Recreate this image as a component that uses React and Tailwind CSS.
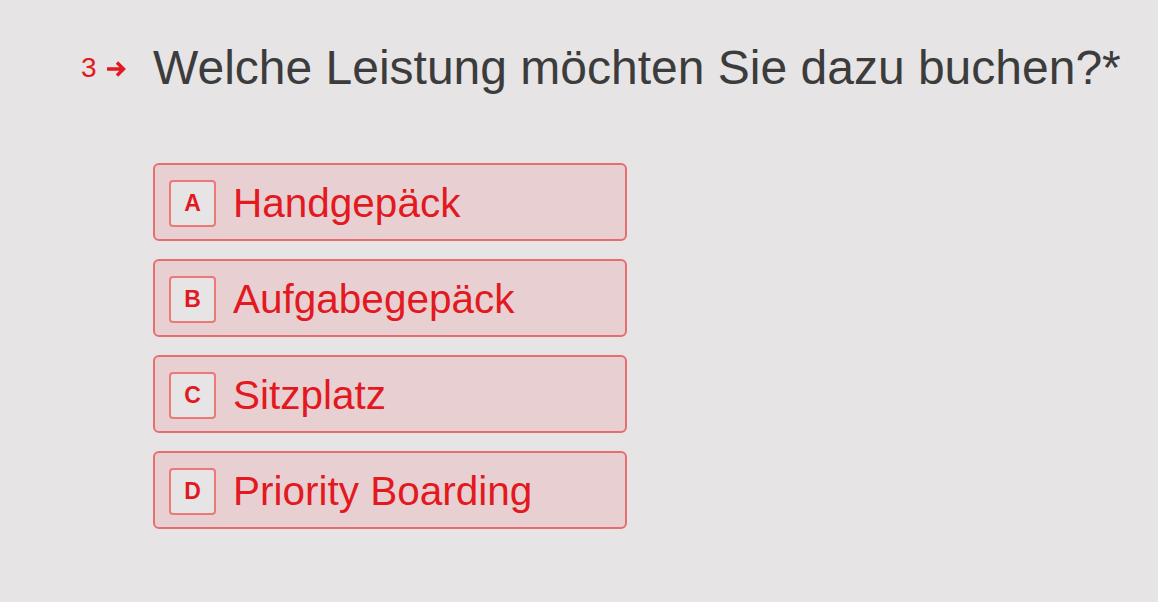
export default function App() {
  const options = [
    ["A", "Handgepäck"],
    ["B", "Aufgabegepäck"],
    ["C", "Sitzplatz"],
    ["D", "Priority Boarding"],
  ];
  return (
    <div
      className="w-[1158px] h-[602px] bg-[#e6e4e5] overflow-hidden pt-[40px]"
      style={{ fontFamily: '"Liberation Sans", Arial, sans-serif' }}
    >
      <div className="flex items-baseline">
        <div className="w-[153px] pl-[81px] flex items-center text-[#e2191f] text-[28px] leading-[56px] relative -top-[7px]">
          <span>3</span>
          <svg className="ml-[9px] relative top-[1px]" width="21" height="18" viewBox="0 0 21 18" fill="none">
            <path d="M1 9H18M11 2.5L17.5 9L11 15.5" stroke="#e2191f" strokeWidth="3.4" strokeLinecap="butt" strokeLinejoin="miter" />
          </svg>
        </div>
        <h1 className="text-[48px] leading-[56px] text-[#3c3c3c] font-normal">
          Welche Leistung möchten Sie dazu buchen?*
        </h1>
      </div>
      <div className="mt-[60px] ml-[153px] flex flex-col gap-[18px]">
        {options.map(([k, label]) => (
          <div
            key={k}
            className="w-[474px] h-[78px] rounded-[6px] border-2 border-[#e86d6d] bg-[#e8d0d2] flex items-center pl-[14px]"
          >
            <div className="w-[47px] h-[47px] rounded-[4px] border-2 border-[#ec7878] bg-[#e6e4e5] flex items-center justify-center text-[#e2191f] font-bold text-[23px] relative top-[1px]">
              {k}
            </div>
            <span className="ml-[17px] text-[40.5px] text-[#e2191f] leading-none relative top-[1px]">{label}</span>
          </div>
        ))}
      </div>
    </div>
  );
}
